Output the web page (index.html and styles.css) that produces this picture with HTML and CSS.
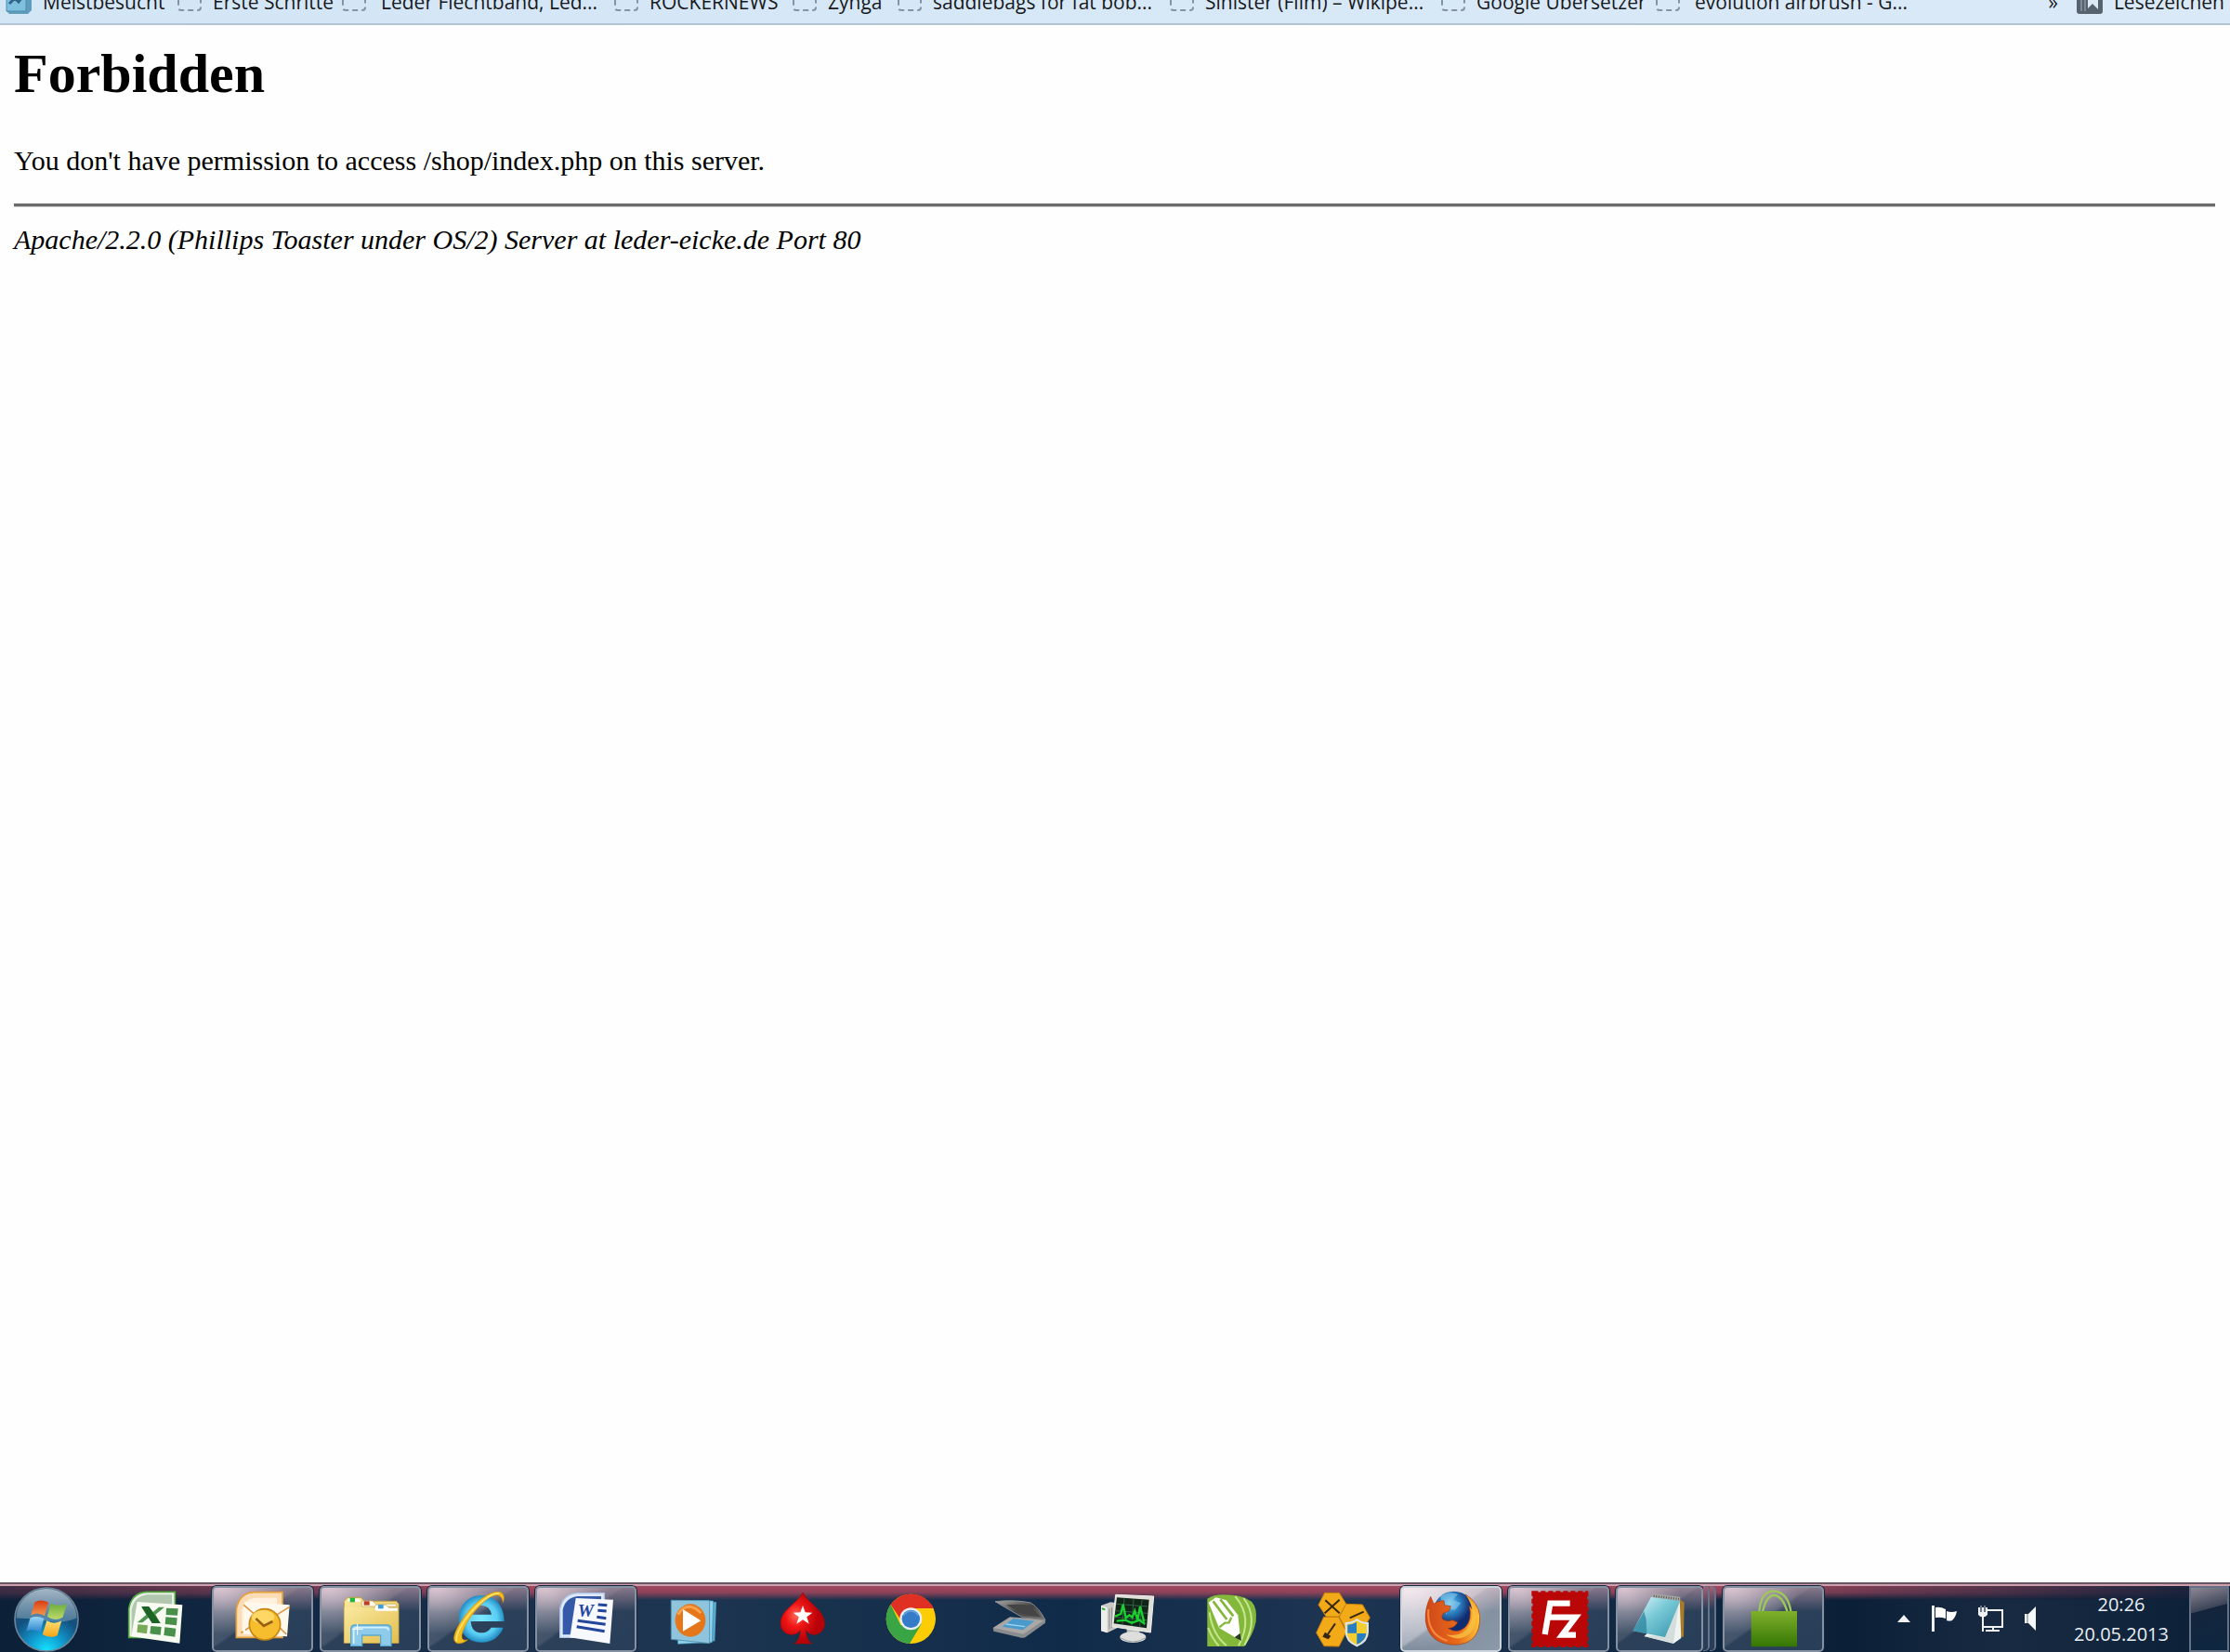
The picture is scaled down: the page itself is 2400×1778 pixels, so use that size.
FILE: index.html
```html
<!DOCTYPE html>
<html lang="de">
<head>
<meta charset="utf-8">
<meta name="viewport" content="width=device-width, initial-scale=1">
<title>403 Forbidden</title>
<link rel="stylesheet" href="styles.css">
</head>
<body>
<nav class="bookmarks" aria-label="Lesezeichen">
  <div class="bookmark-list">
    <a class="bookmark" href="#"><svg class="bookmark-icon" viewBox="0 0 28 28" aria-hidden="true"><path d="M1 2h23l4 4v17l-4 4H4l-3-3z" fill="#5f9dbd"/><path d="M1 2h21v22H1z" fill="#7fc0df" stroke="#4d8bab"/><path d="M4 16l6-6 4 4 6-8" fill="none" stroke="#2f6687" stroke-width="3"/></svg>Meistbesucht</a>
    <a class="bookmark" href="#"><span class="bookmark-blank"></span>Erste Schritte</a>
    <a class="bookmark wide" href="#"><span class="bookmark-blank"></span>Leder Flechtband, Led...</a>
    <a class="bookmark" href="#"><span class="bookmark-blank"></span>ROCKERNEWS</a>
    <a class="bookmark" href="#"><span class="bookmark-blank"></span>Zynga</a>
    <a class="bookmark" href="#"><span class="bookmark-blank"></span>saddlebags for fat bob...</a>
    <a class="bookmark" href="#"><span class="bookmark-blank"></span>Sinister (Film) – Wikipe...</a>
    <a class="bookmark" href="#"><span class="bookmark-blank"></span>Google Übersetzer</a>
    <a class="bookmark wide" href="#"><span class="bookmark-blank"></span>evolution airbrush - G...</a>
  </div>
  <button class="bookmark more" type="button">»</button>
  <button class="bookmark all" type="button"><svg class="bookmark-icon" viewBox="0 0 28 28" aria-hidden="true"><rect y="1" width="28" height="26" rx="3" fill="#56626e"/><path d="M12 6h11v16l-6-6-5 5z" fill="#dceaf6"/><path d="M5 4v20M9 4v20" stroke="#7d8995" stroke-width="2"/></svg>Lesezeichen</button>
</nav>

<main class="page">
  <h1>Forbidden</h1>
  <p>You don't have permission to access /shop/index.php on this server.</p>
  <hr>
  <address>Apache/2.2.0 (Phillips Toaster under OS/2) Server at leder-eicke.de Port 80</address>
</main>

<footer class="taskbar">
  <button class="start" type="button" aria-label="Start">
    <svg viewBox="42 42 222 222" aria-hidden="true">
      <defs>
        <radialGradient id="orb" cx=".5" cy="1" r=".95"><stop offset="0" stop-color="#16e6ff"/><stop offset=".3" stop-color="#1299cf"/><stop offset=".62" stop-color="#12517f"/><stop offset="1" stop-color="#2b5170"/></radialGradient>
        <linearGradient id="orbShine" x2="0" y2="1"><stop offset="0" stop-color="#b8c8d4" stop-opacity=".85"/><stop offset="1" stop-color="#8ea9bd" stop-opacity=".45"/></linearGradient>
        <linearGradient id="winR" x2="0" y2="1"><stop offset="0" stop-color="#d83a12"/><stop offset="1" stop-color="#f79a4e"/></linearGradient>
        <linearGradient id="winG" x2="0" y2="1"><stop offset="0" stop-color="#6aae3a"/><stop offset="1" stop-color="#c0da6c"/></linearGradient>
        <linearGradient id="winB" x2="0" y2="1"><stop offset="0" stop-color="#9bd6f6"/><stop offset="1" stop-color="#2582cc"/></linearGradient>
        <linearGradient id="winY" x2="0" y2="1"><stop offset="0" stop-color="#ffdf72"/><stop offset="1" stop-color="#f5a415"/></linearGradient>
      </defs>
      <circle cx="153" cy="153" r="105" fill="url(#orb)" stroke="#6d8598" stroke-width="5"/>
      <path d="M53 148a100 97 0 0 1 200 0q-50 20-100 10t-100-10z" fill="url(#orbShine)"/>
      <path d="M114 95q22-12 46 2l-13 44q-22-14-45-3z" fill="url(#winR)"/>
      <path d="M167 100q27 12 54 1l-14 45q-27 15-51-2z" fill="url(#winG)"/>
      <path d="M99 148q23-10 46 2l-13 46q-22-14-46-4z" fill="url(#winB)"/>
      <path d="M154 157q23 14 49 1l-14 48q-24 12-49-4z" fill="url(#winY)"/>
    </svg>
  </button>

  <div class="tasks">
    <button class="task" type="button" aria-label="Microsoft Excel">
      <svg viewBox="402 45 192 216" aria-hidden="true">
        <path d="M413 211v-92q8-52 57-55h92v147z" fill="#e8f1e5" stroke="#55a63f" stroke-width="5"/>
        <path d="M422 203v-80q8-45 50-50h80v50l-100-20z" fill="#b1c7ae"/>
        <path d="M440 96l146 10-9 124-156-22z" fill="#f8fbf2"/>
        <g fill="#49904a"><path d="M534 116l38 2-2 22-37-2zM532 145l37 3-2 24-37-4zM529 178l36 4-3 27-36-5zM484 174l34 3-3 26-34-4z"/><path d="M442 169l32 3-3 27-32-5z" fill="#79aa57"/></g>
        <path d="M454 113h24l13 16 19-16h18l-29 24 16 28h-26l-12-18-20 16h-17l29-25z" fill="#4d9651"/><path d="M454 111h24l37 54h-27z" fill="#1c6425"/>
      </svg>
    </button>
    <button class="task open" type="button" aria-label="Microsoft Outlook">
      <svg viewBox="751 45 192 216" aria-hidden="true">
        <path d="M761 211v-90q8-52 56-56h93v146z" fill="#fbdcb5" stroke="#e6a03c" stroke-width="5"/>
        <path d="M779 190v-68q8-35 40-39h73v107z" fill="#fff1de"/><path d="M776 194h45" stroke="#d98a1c" stroke-width="5"/>
        <path d="M788 96l145 10-8 102-142-8z" fill="#fff8ec"/>
        <path d="M785 106l66 57 82-51M790 188l48-37M872 152l51 49" fill="none" stroke="#db963e" stroke-width="5"/>
        <circle cx="853" cy="169" r="50" fill="#f6bd2f" stroke="#c88713" stroke-width="5"/><ellipse cx="847" cy="145" rx="37" ry="22" fill="#ffe278" opacity=".75"/>
        <path d="M824 150l26 24 28-15" fill="none" stroke="#986014" stroke-width="8"/>
      </svg>
    </button>
    <button class="task open" type="button" aria-label="Windows-Explorer">
      <svg viewBox="1101 45 192 216" aria-hidden="true">
        <defs><linearGradient id="folder" x2="1" y2="1"><stop offset="0" stop-color="#f9e9a0"/><stop offset="1" stop-color="#e3be4e"/></linearGradient></defs>
        <path d="M1111 229V94l12-12h42l12 12h103l7 9v126z" fill="url(#folder)" stroke="#c5a145" stroke-width="3"/>
        <path d="M1124 86h35l8 9h-43z" fill="#fff"/><path d="M1130 83h16v14h-16z" fill="#21b83b"/>
        <path d="M1168 93h34l12 10h66v8h-112z" fill="#fffbe9" stroke="#c7a64c" stroke-width="2"/><path d="M1175 94h18v13h-18z" fill="#bd3c24"/>
        <path d="M1212 106h33l11 9h29v13h-80z" fill="#fff" stroke="#c7a64c" stroke-width="2"/><path d="M1221 105h17v13h-17z" fill="#3b9fd6"/>
        <path d="M1112 114h91l13 11h69v103H1112z" fill="url(#folder)"/>
        <path d="M1133 238v-54q0-13 14-13h102q14 0 14 13v54h-34v-34h-60v34z" fill="#8ecbea" stroke="#5ba8ce" stroke-width="4"/><path d="M1142 230v-42q0-9 10-9h92q10 0 10 9" fill="none" stroke="#d4f1ff" stroke-width="5"/><path d="M1154 167v36M1137 184h35" stroke="#fff" stroke-width="3"/>
      </svg>
    </button>
    <button class="task open" type="button" aria-label="Internet Explorer">
      <svg viewBox="99 45 192 216" aria-hidden="true">
        <defs><radialGradient id="ie"><stop offset="0" stop-color="#7ee7ff"/><stop offset=".7" stop-color="#59cdf2"/><stop offset="1" stop-color="#238dc5"/></radialGradient></defs>
        <path d="M204 75c46 0 74 35 74 84H170c1 25 15 37 35 37 15 0 24-7 31-17h39c-11 31-38 48-71 48-44 0-73-32-73-76s30-76 73-76zm-33 62h66c-3-18-15-29-32-29s-30 11-34 29z" fill="url(#ie)" fill-rule="evenodd"/>
        <path d="M274 98c6-16 3-31-12-34-27-4-74 27-110 76-34 46-48 85-24 90 9 2 21-3 32-11-18 4-24-5-15-29 9-25 30-58 59-86 34-33 64-43 70-6z" fill="#f3bd20" stroke="#cd9411" stroke-width="2"/>
        <path d="M262 69c-23-3-65 26-100 71-28 36-43 71-37 83" fill="none" stroke="#ffe66b" stroke-width="5"/>
      </svg>
    </button>
    <button class="task open" type="button" aria-label="Microsoft Word">
      <svg viewBox="447 45 192 216" aria-hidden="true">
        <path d="M458 211v-92q8-47 56-51h87v143z" fill="#dfe9f7" stroke="#adc4e9" stroke-width="4"/>
        <path d="M467 202v-80q8-39 49-44h75v124z" fill="#3459a8"/>
        <path d="M509 84l121 5-11 142-129-20z" fill="#f7f9ff"/>
        <text class="word-letter" x="515" y="145">W</text>
        <path d="M581 105l29 2M580 124l28 2M577 145l30 4M515 157l90 12M512 176l90 15" stroke="#23459a" stroke-width="9"/>
      </svg>
    </button>
    <button class="task" type="button" aria-label="Windows Media Player">
      <svg viewBox="792 45 192 216" aria-hidden="true">
        <path d="M840 93l120 4-5 126-115 8z" fill="#58a8cc"/><path d="M830 92l120 1-4 134-110 5z" fill="#91d3ec" stroke="#468fb3" stroke-width="2"/><path d="M814 91l124 1v138l-124-13z" fill="#8fc4dc" stroke="#5097b8" stroke-width="3"/>
        <ellipse cx="876" cy="156" rx="49" ry="53" fill="#e57619"/><path d="M836 137q30-48 74-5" fill="none" stroke="#f9a34d" stroke-width="9"/><path d="M852 120l58 37-58 34z" fill="#fff"/>
      </svg>
    </button>
    <button class="task" type="button" aria-label="PokerStars">
      <svg viewBox="1143 45 192 216" aria-hidden="true">
        <defs><radialGradient id="spade" cx=".35" cy=".45"><stop offset="0" stop-color="#ff6758"/><stop offset=".45" stop-color="#f11616"/><stop offset="1" stop-color="#b90308"/></radialGradient></defs>
        <path d="M1242 66c16 33 70 57 70 99 0 37-41 49-60 23 2 20 6 35 20 43h-58c15-8 19-23 20-43-20 26-64 14-64-23 0-42 56-66 72-99z" fill="url(#spade)" stroke="#9f090b" stroke-width="2"/>
        <path d="M1242 108l8 22 23 1-18 14 7 22-20-13-20 13 7-22-18-14 23-1z" fill="#fff"/>
      </svg>
    </button>
    <button class="task" type="button" aria-label="Google Chrome">
      <svg viewBox="141 45 192 216" aria-hidden="true">
        <circle cx="241" cy="151" r="80" fill="#fccc05"/>
        <path d="M176 105a80 80 0 0 0 61 126l38-64-67 4z" fill="#39a544"/>
        <path d="M176 105l32 48 33-36h73a80 80 0 0 0-138-12z" fill="#df3023"/>
        <circle cx="241" cy="151" r="36" fill="#e9eef2"/><circle cx="241" cy="151" r="29" fill="#347bc8"/><path d="M217 140q24-28 48 0" fill="none" stroke="#65a2dd" stroke-width="5"/>
      </svg>
    </button>
    <button class="task" type="button" aria-label="Scanner">
      <svg viewBox="489 45 192 216" aria-hidden="true">
        <defs><linearGradient id="lid" x2="1" y2="1"><stop offset="0" stop-color="#a9a9a9"/><stop offset=".5" stop-color="#424242"/><stop offset="1" stop-color="#777"/></linearGradient></defs>
        <path d="M506 180l54-35 115 8v11l-65 47q-9 3-18 0l-84-20z" fill="#898b8e"/><path d="M507 180l55-34 108 10-66 44z" fill="#a9a8a6"/>
        <path d="M535 176l37-26 68 8-38 29z" fill="#4a9ace"/><path d="M548 168l61 8" stroke="#9dd4ec" stroke-width="4"/>
        <path d="M513 95q60-7 115 4 28 18 47 56l-74-9z" fill="url(#lid)" stroke="#8d8d8d" stroke-width="3"/><path d="M549 106q42-5 75 2l37 37-53-6z" fill="#444"/>
      </svg>
    </button>
    <button class="task" type="button" aria-label="Systemmonitor">
      <svg viewBox="837 45 192 216" aria-hidden="true">
        <path d="M855 108l31-11 28 4v76l-39 19-20-6z" fill="#c9c9c5"/><path d="M855 108l20 7v81l-20-6z" fill="#eeeeeb"/><path d="M858 115l10 3v6l-10-3z" fill="#26ad27"/><path d="M882 118v66M890 114v67" stroke="#8a8d8b" stroke-width="3"/>
        <path d="M938 180h41v24h-41z" fill="#b7babb"/><ellipse cx="958" cy="210" rx="42" ry="18" fill="#dedfdd"/><path d="M916 211q42 28 84 0" fill="none" stroke="#9a9e9d" stroke-width="3"/>
        <path d="M902 73l123 5-10 117-124-19z" fill="#dedfd9" stroke="#f2f1ec" stroke-width="3"/><path d="M906 82l104 7-8 92-106-15z" fill="#102418"/>
        <path d="M903 103l104 8M902 125l103 8M900 146l103 9M930 85l-6 82M960 87l-6 86M987 90l-7 86" stroke="#326246" stroke-width="3"/>
        <path d="M900 143l19-8 7-31 9 44 11-9 10 7 8-21 9 30 8-44 13 50M905 158l29-3 20 9 25-9 18 13" fill="none" stroke="#1bcf31" stroke-width="7"/>
      </svg>
    </button>
    <button class="task" type="button" aria-label="CorelDRAW">
      <svg viewBox="1185 45 192 216" aria-hidden="true">
        <path d="M1198 240V86q20-13 52-13 61 0 91 22 19 20 14 65-8 42-38 80z" fill="#83b83b"/>
        <path d="M1288 78q60 70 11 160M1315 84q50 64 3 152M1205 130q10 72 55 107M1201 180q12 34 34 58" fill="none" stroke="#c8e58f" stroke-width="6"/>
        <path d="M1202 98l24-16 33 9 38 48 9 82-70-41z" fill="#fff"/><path d="M1217 94l44 59M1240 88l42 54" stroke="#83b83b" stroke-width="8"/><path d="M1237 178l18-14 13-1 8-17" fill="none" stroke="#83b83b" stroke-width="7"/><path d="M1286 211l18-14 4 25z" fill="#263b21"/>
      </svg>
    </button>
    <button class="task" type="button" aria-label="Werkzeuge">
      <svg viewBox="213 45 192 216" aria-hidden="true">
        <g stroke="#c77f0d" stroke-width="3" fill="#f3aa18"><path d="M257 67h47l23 37-24 40h-41l-25-38z"/><path d="M326 103l53 2 24 42-22 38h-55l-22-40z"/><path d="M254 145h48l25 48-24 47-48-1-25-43z"/></g>
        <path d="M259 91l46 42M305 89l-48 44M338 148l45-20M291 166l-24 35" stroke="#38280b" stroke-width="6"/><path d="M258 194l19 12-8 11-19-8z" fill="#38280b"/>
        <path d="M326 165q19 0 35-12 18 13 35 12v28q0 31-35 45-35-14-35-45z" fill="#f4ce31" stroke="#dce5ee" stroke-width="6"/>
        <path d="M331 170q17-1 29-9v36h-29zM361 198h30q-2 24-30 35z" fill="#277dc2"/>
      </svg>
    </button>
  </div>

  <div class="tasks">
    <button class="task open active" type="button" aria-label="Mozilla Firefox">
      <svg viewBox="567 45 192 216" aria-hidden="true">
        <defs><radialGradient id="globe" cx=".4" cy=".3"><stop offset="0" stop-color="#a4e3fb"/><stop offset=".4" stop-color="#338fcf"/><stop offset="1" stop-color="#102c70"/></radialGradient><linearGradient id="fox" x2="1"><stop offset="0" stop-color="#cf471a"/><stop offset=".6" stop-color="#e86a1a"/><stop offset="1" stop-color="#ffc638"/></linearGradient></defs>
        <circle cx="671" cy="128" r="66" fill="url(#globe)"/><path d="M627 79q28-20 57-7l-17 18 27 10-20 23-23-9-4 25z" fill="#83c5ea" opacity=".65"/>
        <path d="M596 79l10 24q13-11 33-11l2 15 20 3-5 15-20 9q-8 15 2 20 13 8 28 1l17 7q-9 19-31 19 29 21 56-3 23-23 13-69l9 10q-4-27-21-47 38 23 46 68 3 92-81 95-84-3-94-77-3-43 16-79z" fill="url(#fox)" stroke="#a83812" stroke-width="2"/>
        <path d="M709 73q37 52 12 98-23 42-75 31 43 27 79-6 38-51-7-115z" fill="#f8c143" opacity=".8"/><path d="M589 120q-7 81 61 102" fill="none" stroke="#f7893b" stroke-width="6"/>
      </svg>
    </button>
    <button class="task open" type="button" aria-label="FileZilla">
      <svg viewBox="915 45 192 216" aria-hidden="true">
        <path d="M928 67h171v170H928z" fill="#b90607" stroke="#b90607" stroke-width="5"/><path d="M928 67h171v170H928z" fill="none" stroke="#b90607" stroke-width="12" stroke-dasharray="15 9"/>
        <path d="M965 201l17-100h64M975 146h46M1018 146h46l-43 57h44" fill="none" stroke="#fff" stroke-width="19"/>
      </svg>
    </button>
    <div class="stack">
      <button class="task open short" type="button" aria-label="Editor">
        <svg viewBox="162 45 192 216" aria-hidden="true">
          <defs><linearGradient id="note" x2="1" y2="1"><stop offset="0" stop-color="#e6fbff"/><stop offset=".45" stop-color="#79c9d7"/><stop offset="1" stop-color="#3292a8"/></linearGradient></defs>
          <path d="M324 88l14 10-2 111-18 1z" fill="#a97a27"/><path d="M323 86l5 127-25 18-94-24z" fill="#eef4f2"/><path d="M303 229l-96-22 65-3 48-97z" fill="#d4dedd"/>
          <path d="M231 80l94 13-49 117-104-20z" fill="url(#note)"/><path d="M208 127l-36 63 45 9-2-47z" fill="#287f98" opacity=".7"/><path d="M236 70l89 10-1 13-91-12z" fill="#a8aaa5"/><path d="M239 77l82 10" stroke="#555" stroke-width="7" stroke-dasharray="3 5"/>
        </svg>
      </button>
      <span class="stack-edge"></span><span class="stack-edge"></span>
    </div>
    <button class="task open" type="button" aria-label="Shop">
      <svg viewBox="534 45 192 216" aria-hidden="true">
        <defs><linearGradient id="bag" x2="0" y2="1"><stop offset="0" stop-color="#7fb02b"/><stop offset="1" stop-color="#347604"/></linearGradient></defs>
        <path d="M583 132q3-68 45-71 49 2 58 71M593 132q12-54 35-57 30-2 47 57" fill="none" stroke="#9dc958" stroke-width="7"/>
        <path d="M557 126h148v115H557z" fill="url(#bag)"/>
      </svg>
    </button>
  </div>

  <div class="tray">
    <button class="tray-button" type="button" aria-label="Ausgeblendete Symbole einblenden"><svg class="arrow" viewBox="0 0 14 10"><path d="M0 9l7-8 7 8z" fill="#f1f3f5"/></svg></button>
    <button class="tray-button" type="button" aria-label="Wartungscenter"><svg viewBox="0 0 28 28"><path d="M1 0h3v28H1z" fill="#eef1f4"/><path d="M5 2q5-1 11 2v10q-5-2-11-1zM17 6q5 2 11 0-1 6-5 10-3 1-6 0z" fill="#fff"/></svg></button>
    <button class="tray-button" type="button" aria-label="Netzwerk"><svg viewBox="0 0 28 28"><path d="M11 5h16v18H7M6 10v18M9 27h15M17 23v4" fill="none" stroke="#f0f2f3" stroke-width="2"/><path d="M1 2h10v8q-5 5-10 0z" fill="#eef0f1"/><path d="M4 0v7M8 0v7" stroke="#687683" stroke-width="2"/></svg></button>
    <button class="tray-button" type="button" aria-label="Lautsprecher"><svg class="speaker" viewBox="0 0 14 28"><path d="M1 9h4l8-8v26l-8-8H1z" fill="#f7f8f9"/><path d="M4 9v10" stroke="#687683" stroke-width="1"/></svg></button>
    <button class="clock" type="button"><time datetime="20:26">20:26</time><time datetime="2013-05-20">20.05.2013</time></button>
  </div>
  <button class="show-desktop" type="button" aria-label="Desktop anzeigen"></button>
</footer>
</body>
</html>
```
FILE: styles.css
```css
* {
  box-sizing: border-box;
}

body {
  display: flex;
  flex-direction: column;
  min-height: 100vh;
  margin: 0;
  background: #fefefe;
  color: #000;
  font: 30px/34px "Liberation Serif", serif;
}

button {
  margin: 0;
  padding: 0;
  border: 0;
  background: none;
  color: inherit;
  font: inherit;
}

svg {
  display: block;
}

.bookmarks {
  display: flex;
  align-items: flex-end;
  height: 27px;
  padding: 0 6px 9px;
  overflow: hidden;
  border-bottom: 2px solid #b3c4d4;
  background: linear-gradient(90deg, #d3e6f6, #dae9f7);
  color: #17191c;
  font: 21px/28px "Open Sans", "Noto Sans", sans-serif;
}

.bookmark-list {
  display: grid;
  flex: 1;
  grid-template-columns: 185px 177px 293px 192px 113px 293px 292px 231px 1fr;
}

.bookmark {
  display: flex;
  align-items: flex-end;
  gap: 12px;
  color: inherit;
  text-decoration: none;
  white-space: nowrap;
}

.bookmark.wide {
  gap: 16px;
}

.bookmark-icon {
  width: 28px;
  height: 28px;
}

.bookmark-blank {
  width: 26px;
  height: 26px;
  margin-bottom: 4px;
  border: 2px dashed #8494a3;
  border-radius: 4px;
}

.more {
  margin-right: 20px;
}

.page {
  flex: 1;
  padding: 18px 16px 16px 15px;
}

h1 {
  margin: 0 0 43px;
  font-size: 60px;
  line-height: 68px;
}

p {
  margin: 0;
}

hr {
  height: 4px;
  margin: 29px 0 18px;
  border: 0;
  border-top: 3px solid #6c6c6c;
  border-bottom: 1px solid #c2c2c2;
}

.taskbar {
  display: flex;
  height: 75px;
  gap: 10px;
  padding: 2px 1px 1px 13px;
  border-top: 2px solid #685665;
  background:
    linear-gradient(#cf9eac 0 2px, transparent 2px),
    linear-gradient(90deg, #102039aa 0, transparent 24%, transparent 78%, #102039 100%) 0 0 / 100% 17px no-repeat,
    linear-gradient(#a74a60, #8c4258 9px, transparent 17px),
    linear-gradient(90deg, #0c2037, #132b47 16%, #1d3550 30%, #102b49 48%, #1e3552 60%, #102a46 72%, #0b2037 83%, #182a41 90%, #0a2037);
  color: #e9eef5;
}

.start svg {
  width: 74px;
  height: 72px;
}

.tasks {
  display: flex;
  gap: 7px;
}

.start + .tasks {
  padding-left: 15px;
}

.task {
  display: flex;
  align-items: center;
  justify-content: center;
  width: 109px;
  height: 71px;
  border: 2px solid transparent;
  border-radius: 5px;
}

.task svg {
  width: 64px;
  height: 72px;
}

.open {
  border-color: #8491a2;
  background:
    radial-gradient(ellipse at 8% 0, #f3dde6bb, transparent 52%),
    linear-gradient(#d6a6b588, transparent 38%),
    linear-gradient(145deg, #516277, #43546a 44%, #2c4059 47%, #283e59);
  box-shadow: 0 0 0 1px #17243a;
}

.active {
  border-color: #cbd3dc;
  background:
    radial-gradient(ellipse at 8% 0, #fff4f8cc, transparent 70%),
    linear-gradient(#e1c1cda0, transparent 38%),
    linear-gradient(145deg, #adb6c2, #a2acb8 44%, #7e8c9c 47%, #8b99a8);
}

.stack {
  display: flex;
}

.short {
  width: 94px;
}

.stack-edge {
  width: 7px;
  border: solid #66758a;
  border-width: 1px 2px 1px 0;
  border-radius: 0 5px 5px 0;
  background: linear-gradient(#a85f73, #293d57 35%);
}

.tray {
  display: flex;
  flex: 1;
  align-items: center;
  justify-content: flex-end;
  gap: 22px;
}

.tray-button svg {
  width: 28px;
  height: 28px;
}

.tray-button .arrow {
  width: 14px;
  height: 10px;
}

.tray-button .speaker {
  width: 14px;
}

.clock {
  display: flex;
  flex-direction: column;
  align-items: center;
  padding: 2px 12px 0 18px;
  font: 20px/32px "Open Sans", "Noto Sans", sans-serif;
}

.show-desktop {
  width: 43px;
  height: 71px;
  border: 2px solid #647184;
  background: linear-gradient(165deg, #8d8795, #3b4557 35%, #14253d 36%, #0e2741);
}

.word-letter {
  fill: #23459a;
  font: italic bold 58px "Liberation Serif", serif;
}
```
